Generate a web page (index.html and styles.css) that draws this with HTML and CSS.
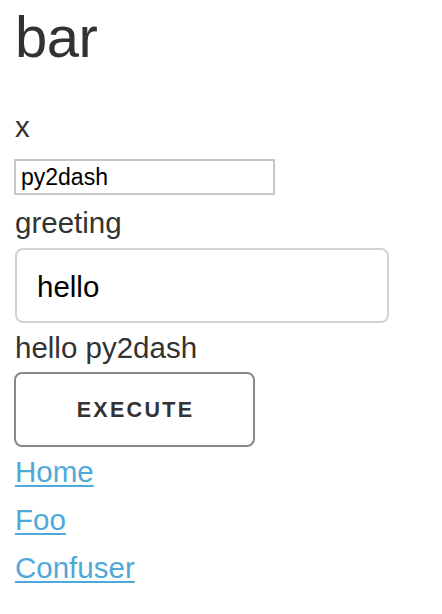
FILE: index.html
```html
<!DOCTYPE html>
<html>
<head>
<meta charset="utf-8">
<link rel="stylesheet" href="styles.css">
</head>
<body>
<div class="app">
  <h1 class="title">bar</h1>
  <div class="label">x</div>
  <input class="plain-input" type="text" value="py2dash">
  <div class="label">greeting</div>
  <input class="styled-input" type="text" value="hello">
  <div class="output">hello py2dash</div>
  <button class="btn">EXECUTE</button>
  <nav class="links">
    <a class="link" href="#">Home</a>
    <a class="link" href="#">Foo</a>
    <a class="link" href="#">Confuser</a>
  </nav>
</div>
</body>
</html>
```

FILE: styles.css
```css
html, body {
  margin: 0;
  padding: 0;
  background: #fff;
}
body {
  font-family: "Liberation Sans", Arial, Helvetica, sans-serif;
  color: #333;
  font-size: 29.5px;
  line-height: 47.5px;
}
.app {
  padding: 0 15px;
  display: flex;
  flex-direction: column;
  align-items: flex-start;
}
.title {
  margin: 2px 0 31px 0;
  font-size: 58px;
  line-height: 70px;
  font-weight: 400;
  letter-spacing: -0.5px;
  color: #323232;
}
.label {
  margin: 0;
}
.plain-input {
  box-sizing: border-box;
  margin: 8.5px 0 4px -1px;
  width: 261px;
  height: 36px;
  padding: 1px 5px 0 5px;
  border: 2px solid #c6c6c6;
  border-radius: 0;
  font-family: "Liberation Sans", Arial, sans-serif;
  font-size: 23px;
  color: #000;
  background: #fff;
  outline: none;
}
.styled-input {
  box-sizing: border-box;
  margin: 1.5px 0 0 0;
  width: 374px;
  height: 75px;
  padding: 3px 20px 0 20px;
  border: 2px solid #d3d3d3;
  border-radius: 8px;
  font-family: "Liberation Sans", Arial, sans-serif;
  font-size: 29.5px;
  color: #000;
  background: #fff;
  outline: none;
}
.output {
  margin-top: 1px;
}
.btn {
  box-sizing: border-box;
  margin: 0.5px 0 0 -1px;
  width: 241px;
  height: 75px;
  border: 2px solid #888;
  border-radius: 8px;
  background: #fff;
  color: #333;
  font-family: "Liberation Sans", Arial, sans-serif;
  font-size: 21.5px;
  font-weight: 700;
  letter-spacing: 2.3px;
  padding: 2px 0 0 2px;
  display: flex;
  align-items: center;
  justify-content: center;
}
.links {
  display: flex;
  flex-direction: column;
  align-items: flex-start;
  line-height: 48px;
  margin-top: 0.5px;
}
.link {
  color: #4fa9d8;
  text-decoration: underline;
  text-decoration-thickness: 2px;
  text-underline-offset: 3px;
}
```
